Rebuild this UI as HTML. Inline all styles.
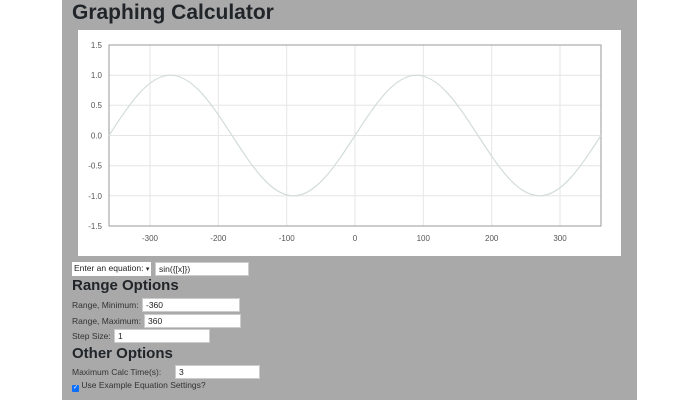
<!DOCTYPE html>
<html><head><style>
body{margin:0;width:700px;height:400px;background:#fff;font-family:"Liberation Sans",sans-serif;overflow:hidden;position:relative}
#main{position:absolute;left:62px;top:0;width:575px;height:400px;background:#a9a9a9}
h1{position:absolute;left:10px;top:1px;margin:0;font-size:21px;font-weight:bold;color:#212529}
h2{position:absolute;left:10px;margin:0;font-size:15px;font-weight:bold;color:#212529}
.lbl{position:absolute;left:10px;font-size:8.5px;line-height:13px;color:#333;white-space:nowrap}
.in{position:absolute;height:14px;background:#fff;border:1px solid #ccc;font-size:8.5px;line-height:12px;padding-left:3px;box-sizing:border-box;color:#222;white-space:nowrap;overflow:hidden}
svg text{font-family:"Liberation Sans",sans-serif;font-size:8px;fill:#555}
</style></head><body>
<div id="main">
<h1>Graphing Calculator</h1>
<svg style="position:absolute;left:16px;top:30px" width="543" height="226">
<rect width="543" height="226" fill="#fff"/>
<g transform="translate(-78,-30)" stroke="#e6e6e6" stroke-width="1">
<line x1="150" y1="45" x2="150" y2="226"/><line x1="218.3" y1="45" x2="218.3" y2="226"/><line x1="286.7" y1="45" x2="286.7" y2="226"/><line x1="355" y1="45" x2="355" y2="226"/><line x1="423.3" y1="45" x2="423.3" y2="226"/><line x1="491.7" y1="45" x2="491.7" y2="226"/><line x1="560" y1="45" x2="560" y2="226"/>
<line x1="109" y1="75.2" x2="601" y2="75.2"/><line x1="109" y1="105.3" x2="601" y2="105.3"/><line x1="109" y1="135.5" x2="601" y2="135.5"/><line x1="109" y1="165.7" x2="601" y2="165.7"/><line x1="109" y1="195.8" x2="601" y2="195.8"/>
<rect x="109" y="45" width="492" height="181" fill="none" stroke="#999"/>
<path transform="translate(355,135.5) scale(0.6833,-60.33)" vector-effect="non-scaling-stroke" fill="none" stroke="#d3dcdb" stroke-width="1.2" d="M-360 0 C-329.9 0.525 -302.4 1 -270 1 C-237.6 1 -210.1 0.525 -180 0 C-149.9 -0.525 -122.4 -1 -90 -1 C-57.6 -1 -30.1 -0.525 0 0 C30.1 0.525 57.6 1 90 1 C122.4 1 149.9 0.525 180 0 C210.1 -0.525 237.6 -1 270 -1 C302.4 -1 329.9 -0.525 360 0"/>
<g stroke="none">
<text x="102" y="48" text-anchor="end">1.5</text><text x="102" y="78" text-anchor="end">1.0</text><text x="102" y="108" text-anchor="end">0.5</text><text x="102" y="138.5" text-anchor="end">0.0</text><text x="102" y="168.5" text-anchor="end">-0.5</text><text x="102" y="199" text-anchor="end">-1.0</text><text x="102" y="229" text-anchor="end">-1.5</text>
<text x="150" y="241" text-anchor="middle">-300</text><text x="218.3" y="241" text-anchor="middle">-200</text><text x="286.7" y="241" text-anchor="middle">-100</text><text x="355" y="241" text-anchor="middle">0</text><text x="423.3" y="241" text-anchor="middle">100</text><text x="491.7" y="241" text-anchor="middle">200</text><text x="560" y="241" text-anchor="middle">300</text>
</g></g></svg>
<div class="in" style="left:10px;top:262px;width:79px;border:none;padding-left:2px">Enter an equation: <span style="font-size:7px">▾</span></div>
<div class="in" style="left:93px;top:262px;width:94px">sin({[x]})</div>
<h2 style="top:277px">Range Options</h2>
<div class="lbl" style="top:299px">Range, Minimum:</div><div class="in" style="left:80px;top:298px;width:98px">-360</div>
<div class="lbl" style="top:315px">Range, Maximum:</div><div class="in" style="left:82px;top:314px;width:97px">360</div>
<div class="lbl" style="top:330px">Step Size:</div><div class="in" style="left:52px;top:329px;width:96px">1</div>
<h2 style="top:345px">Other Options</h2>
<div class="lbl" style="top:366px">Maximum Calc Time(s):</div><div class="in" style="left:113px;top:365px;width:85px">3</div>
<div class="lbl" style="top:379px;left:10px"><span style="display:inline-block;width:7px;height:7px;background:#0d6efd;border-radius:1px;vertical-align:-1px;color:#fff;font-size:6px;line-height:7px;text-align:center">✓</span> Use Example Equation Settings?</div>
</div>
</body></html>
